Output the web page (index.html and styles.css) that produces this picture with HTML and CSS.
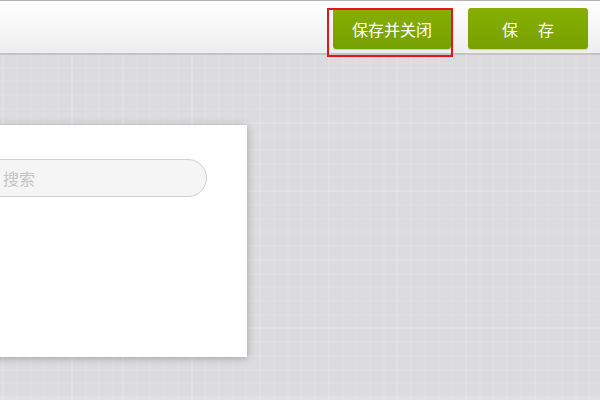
FILE: index.html
```html
<html>
    <head>
        <meta name="viewport" content="width=device-width, initial-scale=1">
        <link rel="stylesheet" href="styles.css">
    </head>

    <body>
        <div class="topbar">
            <div class="marked">
                <button class="btn">保存并关闭</button>
            </div>
            <button class="btn btn-save">保　存</button>
        </div>

        <div class="workspace">
            <div class="panel">
                <input type="text" class="search" placeholder="搜索" />
            </div>
        </div>
    </body>
</html>
```

FILE: styles.css
```css
* {
  box-sizing: border-box;
}

html, body {
  margin: 0;
  height: 100%;
  overflow: hidden;
}

body {
  font-family: "Noto Sans CJK SC", "Liberation Sans", sans-serif;
  background-color: #dcdcde;
}

.topbar {
  height: 55px;
  display: flex;
  justify-content: flex-end;
  align-items: flex-start;
  gap: 17px;
  padding: 7px 12px 0 0;
  border-top: 1px solid #b4b4b4;
  border-bottom: 2px solid #c4c4c4;
  background: linear-gradient(#ffffff, #eeeeee);
  box-shadow: 0 1px 0 #d2d2d2;
}

.btn {
  width: 120px;
  height: 41px;
  border: none;
  border-radius: 3px;
  background: linear-gradient(#87af03, #76a000);
  box-shadow: 0 1px 1px rgba(0, 0, 0, 0.15);
  color: #fff;
  font-family: inherit;
  font-size: 16px;
  cursor: pointer;
}

.btn:hover {
  background: linear-gradient(#7ca400, #6b9300);
}

.btn-save {
  letter-spacing: 2px;
  padding-left: 8px;
}

/* red frame drawn around the first button */
.marked {
  position: relative;
}

.marked .btn {
  width: 118px;
}

.marked:after {
  content: "";
  position: absolute;
  left: -6px;
  top: 0;
  right: -2px;
  bottom: -8px;
  border: 2px solid #e8141b;
}

/* soft grid: fine lines every 13.72px, stronger ones every 68.6px */
.workspace {
  height: calc(100% - 55px);
  padding-top: 70px;
  background-color: #dcdcde;
  background-image:
    repeating-linear-gradient(90deg, rgba(255,255,255,0.09) 0 2px, transparent 2px 68.6px),
    repeating-linear-gradient(0deg, rgba(255,255,255,0.09) 0 2px, transparent 2px 68.6px),
    repeating-linear-gradient(90deg, rgba(255,255,255,0.06) 0 2px, transparent 2px 13.72px),
    repeating-linear-gradient(0deg, rgba(255,255,255,0.06) 0 2px, transparent 2px 13.72px);
  background-position: 122px 0, 0 -2px, 122px 0, 0 -2px;
}

.panel {
  width: 287px;
  height: 232px;
  margin-left: -40px;
  padding: 34px 40px 0 20px;
  background: #fff;
  box-shadow: 0 1px 8px rgba(0, 0, 0, 0.28);
}

.search {
  width: 100%;
  height: 38px;
  padding: 0 12px 0 22px;
  border: 1px solid #cfcfcf;
  border-radius: 19px;
  background: #f5f5f5;
  font-family: inherit;
  font-size: 16px;
  color: #555;
  outline: none;
}

.search::placeholder {
  color: #c4c4c4;
}
```
